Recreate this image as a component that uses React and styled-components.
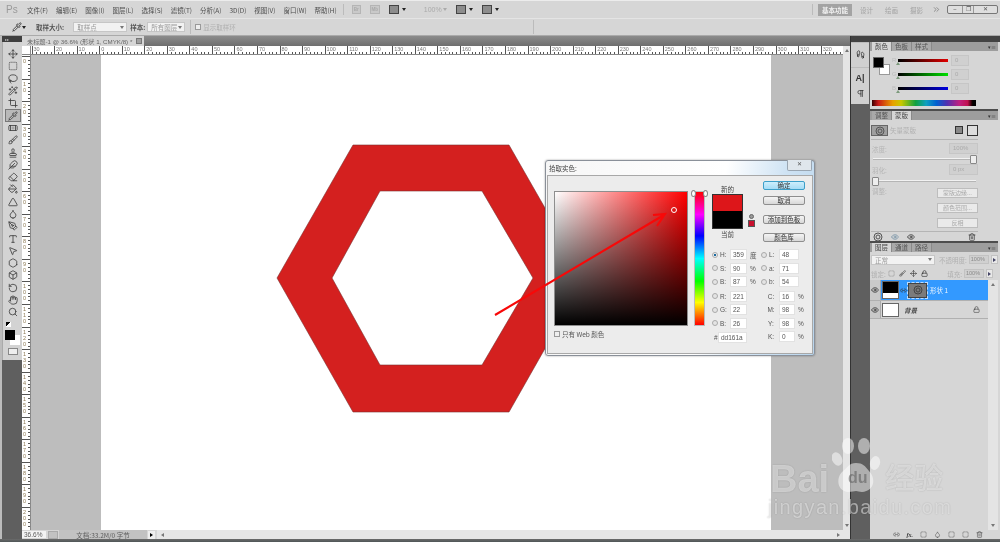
import React from "react";
import styled, { createGlobalStyle } from "styled-components";
import {
  Move, SquareDashed, Lasso, Wand2, Crop, Pipette, Bandage, Brush, Stamp, Feather, Eraser,
  PaintBucket, Triangle, Droplet, PenTool, Type, MousePointer2, Hexagon, Box, RotateCcw, Hand, Search,
  Eye, Link2, Lock, Trash2, ChevronsRight, Footprints, Pilcrow,
} from "lucide-react";

const cjk = `"Noto Sans CJK SC", "Liberation Sans", sans-serif`;

const GlobalStyle = createGlobalStyle`
  html, body { margin: 0; height: 100%; overflow: hidden; }
  body { background: #d6d6d6; font-family: ${cjk}; color: #555; }
  #root { height: 100%; }
  * { box-sizing: border-box; }
`;

const Screen = styled.div`
  position: relative;
  width: 1000px;
  height: 542px;
  display: flex;
  flex-direction: column;
  overflow: hidden;
  background: #d6d6d6;
  font-size: 7px;
  filter: blur(0.45px);
`;

/* top bars */
const MenuBar = styled.div`
  height: 18px;
  display: flex;
  align-items: center;
  padding-left: 6px;
  border-top: 1px solid #ececec;
  color: #4c4c4c;
  flex: none;
`;
const Logo = styled.span`
  width: 21px;
  font: 10px "Liberation Sans", sans-serif;
  color: #9a9a9a;
`;
const MenuItem = styled.span`
  font-size: 6.5px;
  margin-right: 8px;
  white-space: nowrap;
`;
const MenuDivider = styled.i`
  width: 1px;
  height: ${(p) => p.$h || 11}px;
  background: #bbb;
  margin: 0 ${(p) => p.$right ?? 8}px 0 ${(p) => p.$left || 0}px;
  flex: none;
`;
const MiniBtn = styled.span`
  width: ${(p) => p.$w || 10}px;
  height: 9px;
  margin-right: ${(p) => p.$mr ?? 3}px;
  border: 1px solid ${(p) => (p.$dark ? "#444" : "#b5b5b5")};
  background: ${(p) => (p.$dark ? "#8d8d8d" : "#c9c9c9")};
  color: #aaa;
  font: bold 4.5px/7px "Liberation Sans", sans-serif;
  text-align: center;
  flex: none;
`;
const Caret = styled.i`
  width: 0;
  height: 0;
  margin-right: ${(p) => p.$mr ?? 9}px;
  border: 2.5px solid transparent;
  border-top: 3px solid ${(p) => p.$c || "#222"};
  border-bottom: 0;
  flex: none;
`;
const ZoomLabel = styled.span`
  width: 18px;
  margin: 0 1px 0 9px;
  color: #aaa;
  font-family: "Liberation Sans", sans-serif;
  flex: none;
`;
const Spacer = styled.div`
  flex: 1;
`;
const Workspace = styled.span`
  width: 34px;
  height: 12px;
  margin: 0 8px 0 5px;
  background: #a3a3a3;
  color: #f2f2f2;
  text-align: center;
  line-height: 12px;
  font-weight: 700;
  font-size: 6.5px;
`;
const WorkspaceLink = styled.span`
  color: #a2a2a2;
  font-size: 6.5px;
  margin-right: ${(p) => p.$mr ?? 12}px;
`;
const Overflow = styled(ChevronsRight)`
  margin-right: 6px;
  color: #777;
`;
const WindowButtons = styled.div`
  display: flex;
  width: 51px;
  height: 9px;
  margin-right: 2px;
  border: 1px solid #777;
  border-radius: 2px;
  background: #dedede;
  color: #555;
  font: 6px/7px "Liberation Sans", sans-serif;
  text-align: center;
  & > span { flex: 1; border-right: 1px solid #999; }
  & > span:nth-child(2) { flex: 0.75; }
  & > span:last-child { flex: 1.65; border: 0; }
`;
const OptionsBar = styled.div`
  height: 18px;
  display: flex;
  align-items: center;
  padding-left: 12px;
  border-top: 1px solid #e4e4e4;
  border-bottom: 1px solid #aaa;
  color: #6a6a6a;
  flex: none;
`;
const OptLabel = styled.span`
  margin: 0 ${(p) => p.$right || 0}px 0 ${(p) => p.$left || 0}px;
  color: ${(p) => (p.$off ? "#b0b0b0" : "#555")};
  font-size: 6.5px;
  font-weight: ${(p) => (p.$off ? 400 : 700)};
  white-space: nowrap;
`;
const Select = styled.div`
  width: ${(p) => p.$w}px;
  height: 10px;
  display: flex;
  align-items: center;
  justify-content: space-between;
  padding: 0 2px 0 3px;
  background: #f2f2f2;
  border: 1px solid #c6c6c6;
  color: #9a9a9a;
  font-size: 6.5px;
  white-space: nowrap;
  flex: none;
  &::after {
    content: "";
    border: 2px solid transparent;
    border-top: 3px solid #777;
    border-bottom: 0;
  }
`;
const Check = styled.span`
  width: 6px;
  height: 6px;
  border: 1px solid #999;
  background: #eee;
  flex: none;
`;

/* main area */
const Main = styled.div`
  flex: 1;
  min-height: 0;
  display: flex;
`;
const BottomEdge = styled.div`
  height: 3px;
  flex: none;
  background: linear-gradient(#6b6b6b, #4f5657);
`;
const ToolColumn = styled.div`
  width: 22px;
  flex: none;
  display: flex;
  flex-direction: column;
  background: #5f5f5f;
  border-left: 2px solid #bcbcbc;
`;
const ToolHeader = styled.div`
  height: 6px;
  background: #3f3f3f;
  color: #bbb;
  font-size: 4px;
  line-height: 6px;
  padding-left: 3px;
`;
const ToolList = styled.div`
  height: 318px;
  background: #d3d3d3;
  padding-top: 6px;
  display: flex;
  flex-direction: column;
  align-items: center;
  border-left: 1px solid #aaa;
`;
const Tool = styled.div`
  width: 14px;
  height: 12.3px;
  display: flex;
  align-items: center;
  justify-content: center;
  color: #3f3f3f;
  flex: none;
  ${(p) => p.$on && "background:#b9b9b9; outline:1px solid #777; height:11px; margin:1px 0 0.3px;"}
`;
const Swatches = styled.div`
  position: relative;
  width: 15px;
  height: 15px;
  margin-top: 3px;
`;
const Fg = styled.div`
  position: absolute;
  left: 0;
  top: 0;
  width: 10px;
  height: 10px;
  background: #000;
  z-index: 1;
`;
const Bg = styled.div`
  position: absolute;
  right: 0;
  bottom: 0;
  width: 10px;
  height: 10px;
  background: #fff;
`;
const MiniSwatch = styled.div`
  width: 5px;
  height: 5px;
  margin: 3px 8px 0 0;
  background: linear-gradient(135deg, #000 50%, #fff 50%);
  flex: none;
`;
const QuickMask = styled.div`
  width: 10px;
  height: 7px;
  margin-top: 3px;
  background: #eee;
  border: 1px solid #888;
`;

const DocArea = styled.div`
  width: 828px;
  flex: none;
  display: flex;
  flex-direction: column;
  min-width: 0;
`;
const TabRow = styled.div`
  height: 10px;
  background: linear-gradient(#8c8c8c, #6e6e6e);
  display: flex;
  flex: none;
`;
const DocTab = styled.div`
  width: 122px;
  display: flex;
  align-items: center;
  justify-content: space-between;
  background: #d6d6d6;
  color: #666;
  padding: 0 2px 0 5px;
  font-family: "Liberation Sans", "Noto Sans CJK SC", sans-serif;
  font-size: 6.2px;
  white-space: nowrap;
`;
const DocClose = styled.i`
  width: 6px;
  height: 6px;
  background: #a0a0a0;
  border: 1px solid #777;
  flex: none;
`;
const CornerRuler = styled.div`
  width: 9px;
  background: #fff;
  border-right: 1px solid #888;
  border-bottom: 1px solid #888;
  flex: none;
`;
const RulerRow = styled.div`
  height: 9px;
  display: flex;
  overflow: hidden;
  flex: none;
`;
const HRuler = styled.div`
  flex: 1;
  display: flex;
  overflow: hidden;
  background: #fff;
  border-bottom: 1px solid #888;
  padding-left: 0.5px;
`;
const HTick = styled.span`
  flex: none;
  width: 22.55px;
  height: 8px;
  padding-left: 1px;
  border-left: 1px solid #555;
  font: 5.5px/6px "Liberation Sans", sans-serif;
  color: #777;
  background: repeating-linear-gradient(90deg, #555 0 1px, transparent 1px 3.76px) 3px 6px / 100% 2px no-repeat;
`;
const ScrollEnd = styled.div`
  width: 7px;
  background: #e4e4e4;
  flex: none;
  display: flex;
  justify-content: center;
  align-items: ${(p) => (p.$down ? "flex-end" : "center")};
  padding-bottom: ${(p) => (p.$down ? 3 : 0)}px;
`;
const Arrow = styled.i`
  width: 0;
  height: 0;
  border: 2px solid transparent;
  ${(p) => {
    const c = p.$c || "#777";
    if (p.$dir === "up") return `border-top: 0; border-bottom: 3px solid ${c};`;
    if (p.$dir === "down") return `border-bottom: 0; border-top: 3px solid ${c};`;
    if (p.$dir === "left") return `border-left: 0; border-right: 3px solid ${c};`;
    return `border-right: 0; border-left: 3px solid ${c};`;
  }}
  flex: none;
`;
const CanvasRow = styled.div`
  flex: 1;
  min-height: 0;
  display: flex;
`;
const VRuler = styled.div`
  width: 9px;
  display: flex;
  flex-direction: column;
  overflow: hidden;
  background: #fff;
  border-right: 1px solid #888;
  flex: none;
  padding-top: 1px;
`;
const VTick = styled.span`
  flex: none;
  height: 22.55px;
  padding: 1px 0 0 1px;
  border-top: 1px solid #555;
  font: 5.5px/6px "Liberation Sans", sans-serif;
  color: #8d7a55;
  white-space: pre-line;
  background: repeating-linear-gradient(180deg, #555 0 1px, transparent 1px 3.76px) 6px 3px / 2px 100% no-repeat;
`;
const Pasteboard = styled.div`
  flex: 1;
  display: flex;
  background: #bdbdbd;
  padding-left: 70px;
`;
const Page = styled.div`
  width: 670px;
  height: 100%;
  background: #fff;
`;
const StatusBar = styled.div`
  height: 9px;
  display: flex;
  align-items: center;
  background: #d6d6d6;
  font-size: 6.5px;
  color: #5c5c5c;
  flex: none;
`;
const ZoomBox = styled.span`
  width: 24px;
  background: #f3f3f3;
  padding-left: 2px;
  font-family: "Liberation Sans", sans-serif;
`;
const StatusIcon = styled.span`
  width: 10px;
  height: 8px;
  margin: 0 1px 0 2px;
  background: #c2c2c2;
  border: 1px solid #aaa;
`;
const DocInfo = styled.span`
  width: 88px;
  background: #c2c2c2;
  text-align: center;
`;
const StatusArrow = styled.span`
  width: 7px;
  height: 8px;
  margin: 0 2px 0 1px;
  background: #eee;
  display: flex;
  align-items: center;
  justify-content: center;
`;
const HScroll = styled.span`
  flex: 1;
  height: 100%;
  background: #e6e6e6;
  display: flex;
  align-items: center;
  justify-content: space-between;
  padding: 0 10px 0 4px;
`;

/* dock */
const Dock = styled.div`
  flex: 1;
  display: flex;
  flex-direction: column;
  background: #5f5f5f;
  border-left: 1px solid #333;
  min-width: 0;
`;
const DockHeader = styled.div`
  height: 6px;
  background: #434343;
  flex: none;
`;
const DockBody = styled.div`
  flex: 1;
  min-height: 0;
  display: flex;
`;
const IconStrip = styled.div`
  width: 18px;
  flex: none;
`;
const IconGroup = styled.div`
  background: #d0d0d0;
  display: flex;
  flex-direction: column;
  align-items: center;
  gap: 6px;
  padding-top: ${(p) => p.$pt}px;
  color: #333;
  border-top: 1px solid #bcbcbc;
  font: bold 9px/10px "Liberation Sans", sans-serif;
  height: ${(p) => p.$h}px;
`;
const Panels = styled.div`
  flex: 1;
  display: flex;
  flex-direction: column;
  min-width: 0;
  gap: 2px;
  background: #4d4d4d;
  margin-left: 1px;
  border-right: 2px solid #d6d6d6;
`;
const Panel = styled.section`
  background: #d6d6d6;
  height: ${(p) => (p.$h ? p.$h + "px" : "auto")};
  flex: ${(p) => (p.$h ? "none" : 1)};
  display: flex;
  flex-direction: column;
  min-height: 0;
`;
const Tabs = styled.div`
  height: 9px;
  flex: none;
  display: flex;
  background: #9d9d9d;
  padding-left: 2px;
  position: relative;
  &::after {
    content: "▾≡";
    position: absolute;
    right: 2px;
    top: 0;
    font-size: 5px;
    line-height: 9px;
    color: #333;
  }
`;
const Tab = styled.span`
  padding: 0 3px;
  height: 9px;
  line-height: 9px;
  font-size: 6.5px;
  color: ${(p) => (p.$on ? "#444" : "#555")};
  background: ${(p) => (p.$on ? "#d6d6d6" : "#a9a9a9")};
  border-right: 1px solid #8a8a8a;
  white-space: nowrap;
`;

const ColorBody = styled.div`
  display: grid;
  grid-template-columns: 19px 1fr;
  padding: 6px 3px 0 3px;
`;
const FgBg = styled.div`
  position: relative;
  width: 17px;
  height: 18px;
`;
const FgBox = styled.div`
  position: absolute;
  left: 0;
  top: 0;
  width: 11px;
  height: 11px;
  background: #000;
  border: 1px solid #666;
  z-index: 1;
`;
const BgBox = styled.div`
  position: absolute;
  right: 0;
  bottom: 0;
  width: 11px;
  height: 11px;
  background: #fff;
  border: 1px solid #999;
`;
const SliderRows = styled.div`
  display: flex;
  flex-direction: column;
  gap: 2px;
  margin-top: -3px;
`;
const SliderRow = styled.div`
  display: flex;
  align-items: center;
  height: 12px;
  color: #bbb;
  & > b { width: 6px; font-weight: 400; font-size: 6px; font-family: "Liberation Sans", sans-serif; }
`;
const GradientBar = styled.div`
  position: relative;
  width: 50px;
  height: 3px;
  margin-right: 3px;
  background: linear-gradient(90deg, #000, ${(p) => p.$c});
  &::after {
    content: "";
    position: absolute;
    left: -2px;
    top: 3px;
    border: 2.5px solid transparent;
    border-bottom: 3px solid #7c9a7c;
    border-top: 0;
  }
`;
const GhostInput = styled.span`
  width: ${(p) => p.$w || 18}px;
  height: 11px;
  border: 1px solid #c6c6c6;
  background: #d0d0d0;
  color: #aaa;
  padding-left: 3px;
  font: 6px/9px "Liberation Sans", sans-serif;
`;
const Spectrum = styled.div`
  height: 6px;
  margin: 6px 22px 0 2px;
  background: linear-gradient(90deg, #3a0000 0, #c81818 6%, #e8a000 20%, #c8c800 28%, #10a040 42%, #10a0c0 52%, #0060d0 62%, #5030b0 72%, #c02080 84%, #c01050 92%, #200 96%, #000 97%);
`;

const MaskTop = styled.div`
  display: flex;
  align-items: flex-start;
  margin: 5px 20px 0 1px;
  height: 16px;
  border-bottom: 1px solid #b5b5b5;
  color: #b0b0b0;
  gap: 2px;
  font-size: 6.5px;
`;
const MaskThumb = styled.div`
  width: 17px;
  height: 11px;
  display: flex;
  align-items: center;
  justify-content: center;
  background: #9f9f9f;
  border: 1px solid #666;
  color: #555;
`;
const MaskBtn = styled.div`
  width: ${(p) => (p.$on ? 11 : 8)}px;
  height: ${(p) => (p.$on ? 11 : 8)}px;
  margin: ${(p) => (p.$on ? 0 : 1)}px 0 0 ${(p) => p.$gap || 0}px;
  border: 1px solid #333;
  background: ${(p) => (p.$on ? "#ddd" : "#888")};
`;
const PropRow = styled.div`
  display: flex;
  justify-content: space-between;
  align-items: center;
  margin: ${(p) => p.$top || 3}px 20px 0 2px;
  color: #b5b5b5;
  font-size: 6.5px;
`;
const Track = styled.div`
  position: relative;
  height: 1px;
  margin: ${(p) => p.$top || 4}px 22px 0 3px;
  background: #f2f2f2;
  box-shadow: 0 1px 0 #b5b5b5;
  &::after {
    content: "";
    position: absolute;
    top: -3px;
    ${(p) => (p.$end ? "right: -1px;" : "left: -1px;")}
    width: 5px;
    height: 7px;
    border: 1px solid #888;
    border-radius: 1px;
    background: #eee;
  }
`;
const GhostButton = styled.div`
  width: 41px;
  height: 10px;
  margin: 5px 0 0 auto;
  border: 1px solid #bdbdbd;
  background: #eaeaea;
  color: #aaa;
  font-size: 6px;
  line-height: 8px;
  text-align: center;
`;
const Adjust = styled.div`
  position: relative;
  margin: 2px 20px 0 1px;
  color: #b5b5b5;
  padding-bottom: 3px;
  border-bottom: 1px solid #b5b5b5;
  font-size: 6.5px;
`;
const AdjustLabel = styled.span`
  position: absolute;
  left: 1px;
  top: 3px;
`;
const FooterIcons = styled.div`
  display: flex;
  align-items: center;
  gap: ${(p) => p.$gap}px;
  height: 9px;
  padding: 0 ${(p) => p.$right}px 0 ${(p) => p.$left || 0}px;
  color: #555;
  flex: none;
  justify-content: ${(p) => (p.$end ? "flex-end" : "flex-start")};
`;
const FxLabel = styled.span`
  font: italic 700 6px "Liberation Serif", serif;
  color: #333;
`;
const LayerControls = styled.div`
  display: flex;
  align-items: center;
  gap: 2px;
  padding: 2px 5px 0 1px;
  height: ${(p) => p.$h || 13}px;
  color: #b0b0b0;
  font-size: 6.5px;
  flex: none;
  white-space: nowrap;
`;
const LockGlyph = styled.span`
  margin-right: 2px;
  display: flex;
`;
const NumberField = styled.span`
  width: 20px;
  height: 9px;
  background: #d0d0d0;
  border: 1px solid #c2c2c2;
  color: #888;
  font: 5.5px/7px "Liberation Sans", sans-serif;
  padding-left: 1px;
  flex: none;
`;
const SpinBtn = styled.span`
  width: 7px;
  height: 9px;
  background: #e8e8e8;
  border: 1px solid #c2c2c2;
  display: flex;
  align-items: center;
  justify-content: center;
  flex: none;
`;
const LayerList = styled.div`
  flex: 1;
  min-height: 0;
  display: flex;
`;
const LayerRows = styled.div`
  flex: 1;
`;
const LayerRow = styled.div`
  display: grid;
  grid-template-columns: 11px 1fr;
  height: ${(p) => p.$h}px;
  border-bottom: 1px solid #b0b0b0;
`;
const EyeCell = styled.div`
  display: flex;
  align-items: center;
  justify-content: center;
  color: #222;
  background: #c9c9c9;
  border-right: 1px solid #aaa;
`;
const LayerBody = styled.div`
  display: flex;
  align-items: center;
  gap: 1px;
  padding-left: 1px;
  background: ${(p) => (p.$on ? "#3399ff" : "#d6d6d6")};
  color: ${(p) => (p.$on ? "#eaf4ff" : "#444")};
  font-size: 6.5px;
`;
const Thumb = styled.div`
  width: 17px;
  height: ${(p) => (p.$black ? 18 : 14)}px;
  background: ${(p) => (p.$black ? "linear-gradient(#000 70%, #fff 70%)" : "#fff")};
  border: 1px solid #666;
  flex: none;
`;
const VectorThumb = styled.div`
  width: 19px;
  height: 15px;
  background: #7b7b7b;
  border: 1px solid #444;
  outline: 1px dashed #bcdcff;
  display: flex;
  align-items: center;
  justify-content: center;
  color: #444;
  flex: none;
  margin-right: 2px;
`;
const LayerName = styled.span`
  flex: 1;
  font-style: ${(p) => (p.$it ? "italic" : "normal")};
  font-weight: ${(p) => (p.$it ? 700 : 400)};
  margin-left: ${(p) => p.$left || 0}px;
`;
const BackgroundLock = styled(Lock)`
  margin-right: 8px;
  color: #444;
`;
const LayerScroll = styled.div`
  width: 10px;
  background: #e4e4e4;
  display: flex;
  flex-direction: column;
  align-items: center;
  justify-content: space-between;
  padding: 3px 0;
`;

/* colour picker dialog */
const Dialog = styled.div`
  position: absolute;
  left: 545px;
  top: 160px;
  width: 270px;
  height: 196px;
  padding: 0 1px 1px;
  background: linear-gradient(100deg, #f6f6f6 0, #fff 60%, #cfe3f4 80%, #b9d5ec 100%);
  border: 1px solid #8a9099;
  border-radius: 3px;
  box-shadow: 0 0 2px rgba(0, 0, 0, 0.4);
  z-index: 3;
  display: flex;
  flex-direction: column;
  color: #444;
  font-size: 6.5px;
`;
const DialogTitle = styled.div`
  height: 14px;
  flex: none;
  display: flex;
  align-items: flex-start;
  justify-content: space-between;
  padding: 2px 0 0 2px;
  color: #444;
`;
const CloseBtn = styled.span`
  width: 25px;
  height: 11px;
  margin: -3px 1px 0 0;
  border: 1px solid #9aa6b2;
  border-top: 0;
  border-radius: 0 0 2px 2px;
  background: #dfe6ec;
  text-align: center;
  font: 6px/9px "Liberation Sans", sans-serif;
  color: #555;
`;
const DialogBody = styled.div`
  flex: 1;
  display: flex;
  padding: 15px 7px 0 6px;
  background: #ececec;
  border: 1px solid #a8a8a8;
`;
const PickerCol = styled.div`
  width: 134px;
  flex: none;
`;
const ColorField = styled.div`
  position: relative;
  width: 134px;
  height: 135px;
  border: 1px solid #8e8e8e;
  background: linear-gradient(180deg, transparent, #000), linear-gradient(90deg, #fff, #ff0000);
`;
const FieldCursor = styled.span`
  position: absolute;
  left: 116px;
  top: 15px;
  width: 6px;
  height: 6px;
  border: 1px solid #fff;
  border-radius: 50%;
`;
const WebOnly = styled.label`
  display: flex;
  align-items: center;
  gap: 2px;
  margin-top: 3px;
  font-size: 6.5px;
  color: #555;
`;
const HueSlider = styled.div`
  position: relative;
  width: 11px;
  height: 135px;
  margin-left: 6px;
  flex: none;
  border: 1px solid #bbb;
  background: linear-gradient(180deg, #f00 0%, #f0f 17%, #00f 33%, #0ff 50%, #0f0 67%, #ff0 83%, #f00 100%);
  &::before, &::after {
    content: "";
    position: absolute;
    top: -2px;
    width: 3px;
    height: 5px;
    background: #fff;
    border: 1px solid #888;
    border-radius: 50%;
  }
  &::before { left: -4px; }
  &::after { right: -4px; }
`;
const RightCol = styled.div`
  flex: 1;
  margin-top: -10px;
  padding-left: 7px;
  min-width: 0;
`;
const TopRow = styled.div`
  display: flex;
  height: 64px;
`;
const SwatchCol = styled.div`
  width: 44px;
  flex: none;
  display: grid;
  grid-template-columns: 31px 1fr;
  grid-template-rows: 11px 35px 10px;
  align-items: center;
  padding-top: 2px;
`;
const SwatchLabel = styled.span`
  text-align: center;
  font-size: 6.5px;
  grid-column: 1;
`;
const SwatchStack = styled.div`
  grid-column: 1;
  height: 35px;
  border: 1px solid #333;
  background: linear-gradient(#dd161a 50%, #000 50%);
`;
const GamutMark = styled.div`
  grid-column: 2;
  grid-row: 1 / 3;
  align-self: start;
  padding: 31px 0 0 5px;
`;
const GamutIcon = styled.div`
  width: 5px;
  height: 5px;
  margin: 0 0 1px 1px;
  border-radius: 50%;
  background: #999;
  border: 1px solid #666;
`;
const GamutCube = styled.div`
  width: 7px;
  height: 7px;
  background: #c8102e;
  border: 1px solid #555;
`;
const ButtonCol = styled.div`
  flex: 1;
  display: flex;
  flex-direction: column;
  align-items: flex-end;
`;
const DlgButton = styled.button`
  width: 42px;
  height: 9px;
  padding: 0;
  margin-bottom: ${(p) => p.$mb}px;
  border: 1px solid ${(p) => (p.$primary ? "#3c9fc9" : "#8e8e8e")};
  border-radius: 2px;
  background: ${(p) => (p.$primary ? "linear-gradient(#cdeefc,#a5dcf5)" : "linear-gradient(#f4f4f4,#d8d8d8)")};
  color: #333;
  font: 6.5px/7px ${cjk};
`;
const FieldGrid = styled.div`
  display: grid;
  grid-template-columns: 49px 1fr;
  grid-auto-rows: 13.5px;
  margin-top: 3px;
`;
const FieldRow = styled.div`
  display: flex;
  align-items: center;
  margin-top: ${(p) => p.$shift || 0}px;
  font: 6.5px "Liberation Sans", "Noto Sans CJK SC", sans-serif;
  color: #555;
`;
const Radio = styled.span`
  width: 6px;
  height: 6px;
  border-radius: 50%;
  border: 1px solid #aaa;
  background: ${(p) => (p.$on ? "radial-gradient(#1a6aa0 40%, #eee 45%)" : "#e4e4e4")};
  flex: none;
`;
const FieldName = styled.span`
  width: ${(p) => p.$w || 12}px;
  padding-left: 2px;
  text-align: ${(p) => p.$align || "left"};
`;
const ValueBox = styled.span`
  width: ${(p) => p.$w || 17}px;
  height: 11px;
  background: #fff;
  border: 1px solid #e2e2e2;
  padding-left: 2px;
  line-height: 9px;
  font-size: 6.5px;
  flex: none;
`;
const Unit = styled.span`
  margin-left: 3px;
`;

/* arrow + watermark */
const ArrowLayer = styled.svg`
  position: absolute;
  left: 0;
  top: 0;
  z-index: 4;
  pointer-events: none;
`;
const Watermark = styled.div`
  position: absolute;
  left: 770px;
  top: 438px;
  width: 190px;
  z-index: 5;
  color: rgba(255, 255, 255, 0.5);
  text-shadow: 0 0 1.5px rgba(0, 0, 0, 0.22);
  pointer-events: none;
`;
const MarkTop = styled.div`
  height: 60px;
  display: flex;
  align-items: flex-end;
  font: 700 38px/38px "Liberation Sans", sans-serif;
`;
const MarkCjk = styled.span`
  margin: 0 0 7px 56px;
  font: 500 29px/29px ${cjk};
  white-space: nowrap;
`;
const MarkDu = styled.span`
  position: absolute;
  left: 78px;
  top: 32px;
  font: 700 16px/16px "Liberation Sans", sans-serif;
  color: rgba(90, 90, 90, 0.55);
  text-shadow: none;
`;
const Paw = styled.svg`
  position: absolute;
  left: 62px;
  top: 0;
`;
const MarkUrl = styled.div`
  font: 400 20px/20px "Liberation Sans", sans-serif;
  letter-spacing: 1.35px;
  white-space: nowrap;
  margin: -1px 0 0 -2px;
`;

const menus = ["文件(F)", "编辑(E)", "图像(I)", "图层(L)", "选择(S)", "滤镜(T)", "分析(A)", "3D(D)", "视图(V)", "窗口(W)", "帮助(H)"];
const hLabels = [30, 20, 10, 0, ...Array.from({ length: 32 }, (_, i) => (i + 1) * 10)];
const vLabels = Array.from({ length: 21 }, (_, i) => String(i * 10).split("").join("\n"));
const tools = [Move, SquareDashed, Lasso, Wand2, Crop, Pipette, Bandage, Brush, Stamp, Feather, Eraser, PaintBucket, Triangle, Droplet, PenTool, Type, MousePointer2, Hexagon, Box, RotateCcw, Hand, Search];

function VectorIcon() {
  return (
    <svg width="10" height="10" viewBox="0 0 10 10" fill="none" stroke="currentColor">
      <circle cx="5" cy="5" r="4" />
      <circle cx="5" cy="5" r="2" />
    </svg>
  );
}

function ColorPicker() {
  return (
    <Dialog>
      <DialogTitle>
        <span>拾取实色:</span>
        <CloseBtn>✕</CloseBtn>
      </DialogTitle>
      <DialogBody>
        <PickerCol>
          <ColorField>
            <FieldCursor />
          </ColorField>
          <WebOnly>
            <Check />
            只有 Web 颜色
          </WebOnly>
        </PickerCol>
        <HueSlider />
        <RightCol>
          <TopRow>
            <SwatchCol>
              <SwatchLabel>新的</SwatchLabel>
              <SwatchStack />
              <SwatchLabel>当前</SwatchLabel>
              <GamutMark>
                <GamutIcon />
                <GamutCube />
              </GamutMark>
            </SwatchCol>
            <ButtonCol>
              <DlgButton $primary $mb={6}>确定</DlgButton>
              <DlgButton $mb={10}>取消</DlgButton>
              <DlgButton $mb={9}>添加到色板</DlgButton>
              <DlgButton $mb={0}>颜色库</DlgButton>
            </ButtonCol>
          </TopRow>
          <FieldGrid>
            <FieldRow><Radio $on /><FieldName>H:</FieldName><ValueBox>359</ValueBox><Unit>度</Unit></FieldRow>
            <FieldRow><Radio /><FieldName>L:</FieldName><ValueBox $w={20}>48</ValueBox></FieldRow>
            <FieldRow><Radio /><FieldName>S:</FieldName><ValueBox>90</ValueBox><Unit>%</Unit></FieldRow>
            <FieldRow><Radio /><FieldName>a:</FieldName><ValueBox $w={20}>71</ValueBox></FieldRow>
            <FieldRow><Radio /><FieldName>B:</FieldName><ValueBox>87</ValueBox><Unit>%</Unit></FieldRow>
            <FieldRow><Radio /><FieldName>b:</FieldName><ValueBox $w={20}>54</ValueBox></FieldRow>
            <FieldRow $shift={2}><Radio /><FieldName>R:</FieldName><ValueBox>221</ValueBox></FieldRow>
            <FieldRow $shift={2}><FieldName $w={18} $align="center">C:</FieldName><ValueBox $w={16}>16</ValueBox><Unit>%</Unit></FieldRow>
            <FieldRow $shift={2}><Radio /><FieldName>G:</FieldName><ValueBox>22</ValueBox></FieldRow>
            <FieldRow $shift={2}><FieldName $w={18} $align="center">M:</FieldName><ValueBox $w={16}>98</ValueBox><Unit>%</Unit></FieldRow>
            <FieldRow $shift={2}><Radio /><FieldName>B:</FieldName><ValueBox>26</ValueBox></FieldRow>
            <FieldRow $shift={2}><FieldName $w={18} $align="center">Y:</FieldName><ValueBox $w={16}>98</ValueBox><Unit>%</Unit></FieldRow>
            <FieldRow $shift={3}><FieldName $w={6}>#</FieldName><ValueBox $w={29}>dd161a</ValueBox></FieldRow>
            <FieldRow $shift={2}><FieldName $w={18} $align="center">K:</FieldName><ValueBox $w={16}>0</ValueBox><Unit>%</Unit></FieldRow>
          </FieldGrid>
        </RightCol>
      </DialogBody>
    </Dialog>
  );
}

export default function App() {
  return (
    <Screen>
      <GlobalStyle />
      <MenuBar>
        <Logo>Ps</Logo>
        {menus.map((m) => <MenuItem key={m}>{m}</MenuItem>)}
        <MenuDivider $left={-2} />
        <MiniBtn $w={9} $mr={9}>Br</MiniBtn>
        <MiniBtn $mr={9}>Mb</MiniBtn>
        <MiniBtn $dark />
        <Caret />
        <ZoomLabel>100%</ZoomLabel>
        <Caret $c="#aaa" />
        <MiniBtn $dark />
        <Caret />
        <MiniBtn $dark />
        <Caret $mr={0} />
        <Spacer />
        <MenuDivider $right={0} />
        <Workspace>基本功能</Workspace>
        <WorkspaceLink>设计</WorkspaceLink>
        <WorkspaceLink>绘画</WorkspaceLink>
        <WorkspaceLink $mr={9}>摄影</WorkspaceLink>
        <Overflow size={9} />
        <WindowButtons><span>−</span><span>❐</span><span>✕</span></WindowButtons>
      </MenuBar>
      <OptionsBar>
        <Pipette size={10} color="#333" />
        <Caret $mr={0} />
        <OptLabel $left={10} $right={9}>取样大小:</OptLabel>
        <Select $w={54}>取样点</Select>
        <OptLabel $left={3} $right={2}>样本:</OptLabel>
        <Select $w={38}>所有图层</Select>
        <MenuDivider $left={5} $right={4} $h={14} />
        <Check />
        <OptLabel $left={2} $off>显示取样环</OptLabel>
        <MenuDivider $left={297} $h={14} />
      </OptionsBar>
      <Main>
        <ToolColumn>
          <ToolHeader>▸▸</ToolHeader>
          <ToolList>
            {tools.map((T, i) => (
              <Tool key={i} $on={i === 5}><T size={10} strokeWidth={2} /></Tool>
            ))}
            <MiniSwatch />
            <Swatches><Fg /><Bg /></Swatches>
            <QuickMask />
          </ToolList>
        </ToolColumn>
        <DocArea>
          <TabRow>
            <DocTab>未标题-1 @ 36.6% (形状 1, CMYK/8) *<DocClose /></DocTab>
          </TabRow>
          <RulerRow>
            <CornerRuler />
            <HRuler>
              {hLabels.map((n, i) => <HTick key={i}>{n}</HTick>)}
            </HRuler>
            <ScrollEnd><Arrow $dir="up" /></ScrollEnd>
          </RulerRow>
          <CanvasRow>
            <VRuler>
              {vLabels.map((n, i) => <VTick key={i}>{n}</VTick>)}
            </VRuler>
            <Pasteboard>
              <Page>
                <svg width="670" height="475" viewBox="101 55 670 475">
                  <path
                    d="M353 145H509L585 278L509 412H353L277 278ZM380 191L332 278L380 365H482L533 278L482 191Z"
                    fill="#d4201f"
                    fillRule="evenodd"
                    stroke="#7a3030"
                    strokeWidth="0.6"
                  />
                </svg>
              </Page>
            </Pasteboard>
            <ScrollEnd $down><Arrow $dir="down" /></ScrollEnd>
          </CanvasRow>
          <StatusBar>
            <ZoomBox>36.6%</ZoomBox>
            <StatusIcon />
            <DocInfo>文档:33.2M/0 字节</DocInfo>
            <StatusArrow><Arrow $dir="right" $c="#000" /></StatusArrow>
            <HScroll><Arrow $dir="left" /><Arrow $dir="right" /></HScroll>
          </StatusBar>
        </DocArea>
        <Dock>
          <DockHeader />
          <DockBody>
            <IconStrip>
              <IconGroup $h={25} $pt={7}><Footprints size={9} /></IconGroup>
              <IconGroup $h={37} $pt={5}>A|<Pilcrow size={9} /></IconGroup>
            </IconStrip>
            <Panels>
              <Panel $h={67}>
                <Tabs><Tab $on>颜色</Tab><Tab>色板</Tab><Tab>样式</Tab></Tabs>
                <ColorBody>
                  <FgBg><FgBox /><BgBox /></FgBg>
                  <SliderRows>
                    <SliderRow><b>R</b><GradientBar $c="#e00000" /><GhostInput>0</GhostInput></SliderRow>
                    <SliderRow><b>G</b><GradientBar $c="#00e000" /><GhostInput>0</GhostInput></SliderRow>
                    <SliderRow><b>B</b><GradientBar $c="#0000e0" /><GhostInput>0</GhostInput></SliderRow>
                  </SliderRows>
                </ColorBody>
                <Spectrum />
              </Panel>
              <Panel $h={130}>
                <Tabs><Tab>调整</Tab><Tab $on>蒙版</Tab></Tabs>
                <MaskTop>
                  <MaskThumb><VectorIcon /></MaskThumb>
                  <span>矢量蒙版</span>
                  <Spacer />
                  <MaskBtn />
                  <MaskBtn $on $gap={2} />
                </MaskTop>
                <PropRow><span>浓度:</span><GhostInput $w={29}>100%</GhostInput></PropRow>
                <Track $end />
                <PropRow $top={5}><span>羽化:</span><GhostInput $w={29}>0 px</GhostInput></PropRow>
                <Track $top={5} />
                <Adjust>
                  <AdjustLabel>调整:</AdjustLabel>
                  <GhostButton>蒙版边缘...</GhostButton>
                  <GhostButton>颜色范围...</GhostButton>
                  <GhostButton>反相</GhostButton>
                </Adjust>
                <FooterIcons $gap={8} $left={3} $right={22}>
                  <VectorIcon />
                  <Eye size={8} color="#6a8aa0" />
                  <Eye size={8} color="#222" />
                  <Spacer />
                  <Trash2 size={8} color="#333" />
                </FooterIcons>
              </Panel>
              <Panel>
                <Tabs><Tab $on>图层</Tab><Tab>通道</Tab><Tab>路径</Tab></Tabs>
                <LayerControls>
                  <Select $w={64}>正常</Select>
                  <Spacer />
                  <span>不透明度:</span>
                  <NumberField>100%</NumberField>
                  <SpinBtn><Arrow $dir="right" $c="#446" /></SpinBtn>
                </LayerControls>
                <LayerControls $h={15}>
                  <span>锁定:</span>
                  <LockGlyph><SquareDashed size={7} color="#888" /></LockGlyph>
                  <LockGlyph><Brush size={7} color="#444" /></LockGlyph>
                  <LockGlyph><Move size={7} color="#333" /></LockGlyph>
                  <LockGlyph><Lock size={7} color="#222" /></LockGlyph>
                  <Spacer />
                  <span>填充:</span>
                  <NumberField>100%</NumberField>
                  <SpinBtn><Arrow $dir="right" $c="#446" /></SpinBtn>
                </LayerControls>
                <LayerList>
                  <LayerRows>
                    <LayerRow $h={21}>
                      <EyeCell><Eye size={8} /></EyeCell>
                      <LayerBody $on>
                        <Thumb $black />
                        <Link2 size={7} color="#333" />
                        <VectorThumb><VectorIcon /></VectorThumb>
                        <LayerName>形状 1</LayerName>
                      </LayerBody>
                    </LayerRow>
                    <LayerRow $h={18}>
                      <EyeCell><Eye size={8} /></EyeCell>
                      <LayerBody>
                        <Thumb />
                        <LayerName $it $left={4}>背景</LayerName>
                        <BackgroundLock size={7} />
                      </LayerBody>
                    </LayerRow>
                  </LayerRows>
                  <LayerScroll><Arrow $dir="up" /><Arrow $dir="down" /></LayerScroll>
                </LayerList>
                <FooterIcons $end $gap={7} $right={15}>
                  <Link2 size={7} />
                  <FxLabel>fx.</FxLabel>
                  <SquareDashed size={7} />
                  <Droplet size={7} />
                  <SquareDashed size={7} />
                  <SquareDashed size={7} />
                  <Trash2 size={7} />
                </FooterIcons>
              </Panel>
            </Panels>
          </DockBody>
        </Dock>
      </Main>
      <BottomEdge />
      <ColorPicker />
      <ArrowLayer width="1000" height="542" viewBox="0 0 1000 542">
        <path d="M495 315L664 215M653 215L665 214L657 226" fill="none" stroke="#f80808" strokeWidth="2.1" />
      </ArrowLayer>
      <Watermark>
        <Paw width="50" height="58" viewBox="0 0 50 58" fill="currentColor">
          <ellipse cx="16" cy="8" rx="6" ry="8" />
          <ellipse cx="32" cy="8" rx="6" ry="8" />
          <ellipse cx="5" cy="21" rx="5" ry="7" transform="rotate(-25 5 21)" />
          <ellipse cx="43" cy="25" rx="5" ry="7" transform="rotate(15 43 25)" />
          <path d="M24 25c7 0 9 3 13 8 7 7 6 20-7 21-3 0-4-1-6-1s-4 1-8 1c-11-1-12-14-6-20 5-4 7-9 14-9z" />
        </Paw>
        <MarkDu>du</MarkDu>
        <MarkTop>
          <span>Bai</span>
          <MarkCjk>经验</MarkCjk>
        </MarkTop>
        <MarkUrl>jingyan.baidu.com</MarkUrl>
      </Watermark>
    </Screen>
  );
}
